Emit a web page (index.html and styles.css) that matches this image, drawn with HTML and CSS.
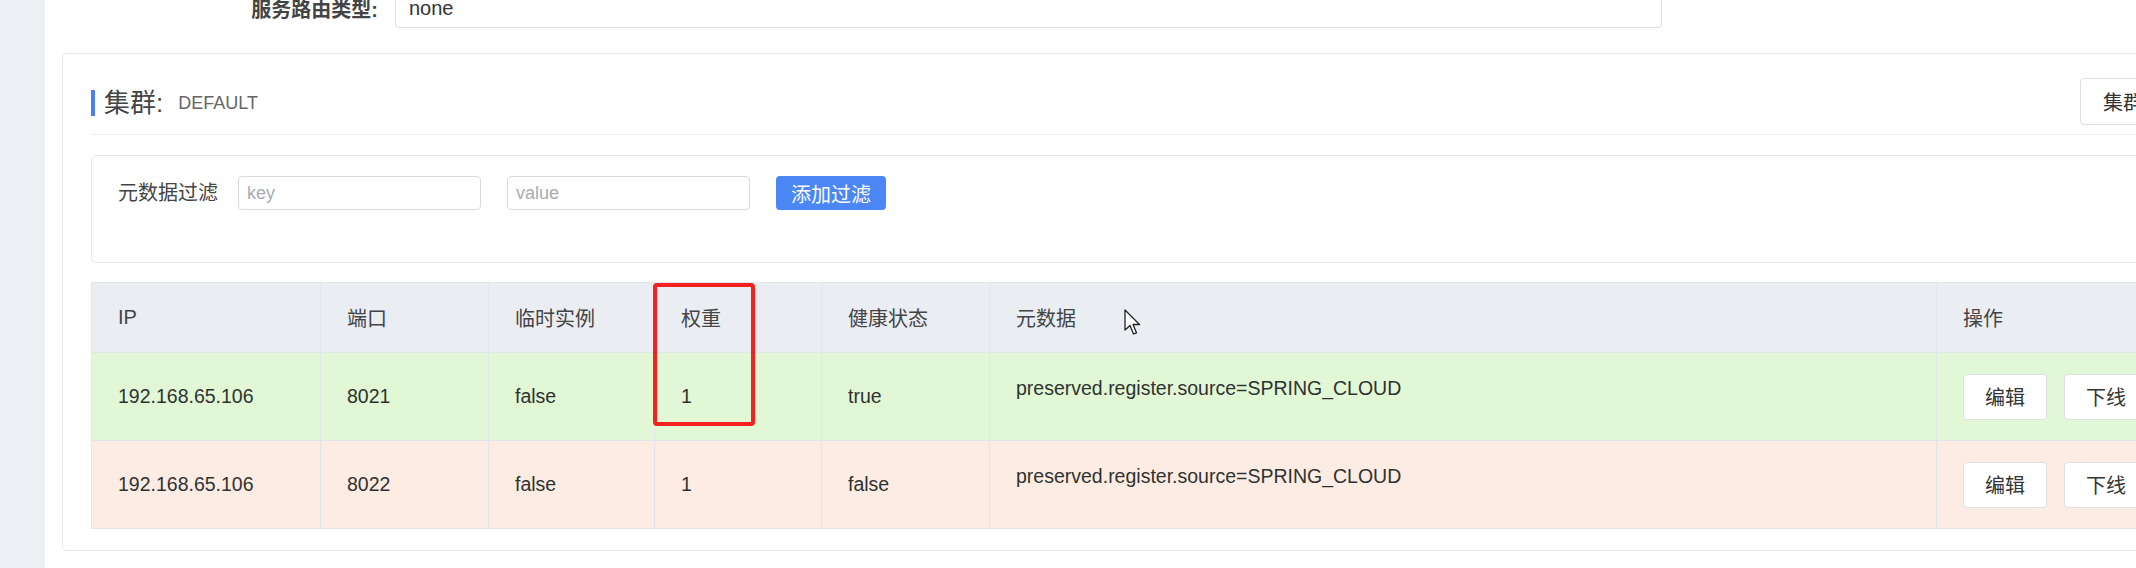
FILE: index.html
```html
<!DOCTYPE html>
<html lang="zh">
<head>
<meta charset="utf-8">
<title>集群</title>
<link rel="stylesheet" href="styles.css">
</head>
<body>
<div class="layout">
  <aside class="sidebar"></aside>
  <main class="main">
    <div class="form-row">
      <label class="form-label">服务路由类型:</label>
      <div class="form-input">none</div>
    </div>
    <section class="card">
      <div class="card-header">
        <div class="title"><span class="title-main">集群:</span><span class="title-sub">DEFAULT</span></div>
        <button class="btn btn-header">集群配置</button>
      </div>
      <div class="filter">
        <span class="filter-label">元数据过滤</span>
        <input class="filter-input" placeholder="key">
        <input class="filter-input" placeholder="value">
        <button class="btn-primary">添加过滤</button>
      </div>
      <div class="table-wrap">
        <table class="grid">
          <colgroup>
            <col class="c-ip"><col class="c-port"><col class="c-eph"><col class="c-weight"><col class="c-health"><col class="c-meta"><col class="c-op">
          </colgroup>
          <thead>
            <tr><th>IP</th><th>端口</th><th>临时实例</th><th>权重</th><th>健康状态</th><th>元数据</th><th>操作</th></tr>
          </thead>
          <tbody>
            <tr class="row-ok">
              <td>192.168.65.106</td><td>8021</td><td>false</td><td>1</td><td>true</td>
              <td><span class="meta">preserved.register.source=SPRING_CLOUD</span></td>
              <td><div class="ops"><button class="btn">编辑</button><button class="btn">下线</button></div></td>
            </tr>
            <tr class="row-bad">
              <td>192.168.65.106</td><td>8022</td><td>false</td><td>1</td><td>false</td>
              <td><span class="meta">preserved.register.source=SPRING_CLOUD</span></td>
              <td><div class="ops"><button class="btn">编辑</button><button class="btn">下线</button></div></td>
            </tr>
          </tbody>
        </table>
        <div class="highlight"></div>
        <svg class="cursor" width="18" height="27" viewBox="0 0 18 27"><path d="M1 1 L1 21 L6 16.5 L9.5 25 L12.5 23.8 L9 15.5 L15.5 15.5 Z" fill="#fff" stroke="#222" stroke-width="1.3" stroke-linejoin="round"/></svg>
      </div>
    </section>
  </main>
</div>
</body>
</html>
```
FILE: styles.css
```css
* { box-sizing: border-box; }
html, body { margin: 0; padding: 0; background: #fff; }
body {
  width: 2136px;
  height: 568px;
  overflow: hidden;
  font-family: "Liberation Sans", "Noto Sans CJK SC", sans-serif;
  color: #333;
}
.layout { display: flex; height: 568px; }
.sidebar { width: 45px; flex-shrink: 0; background: #edf0f5; }
.main { flex: 1; min-width: 0; overflow: hidden; padding-left: 17px; }

.form-row { display: flex; align-items: center; height: 40px; margin-top: -12px; }
.form-label {
  width: 316px; margin-right: 17px; text-align: right;
  font-size: 20px; font-weight: 600; color: #444;
}
.form-input {
  width: 1267px; height: 40px; border: 1px solid #dcdfe6; border-radius: 4px;
  padding-left: 13px; line-height: 38px; font-size: 20px; color: #333;
}

.card {
  width: 2173px; margin-top: 25px; border: 1px solid #e6e8ec; border-radius: 5px;
  padding: 0 28px 21px 28px;
}
.card-header {
  display: flex; align-items: center; justify-content: space-between;
  height: 81px; padding-top: 18px; border-bottom: 1px solid #ebedf1;
}
.title { border-left: 4px solid #4a7ff3; padding-left: 9px; line-height: 26px; height: 26px; display: flex; align-items: center; }
.title-main { font-size: 26px; color: #444; }
.title-sub { font-size: 18px; color: #666; margin-left: 15px; }

.btn {
  height: 46px; padding: 0 21px; border: 1px solid #dcdfe6; border-radius: 4px;
  background: #fff; font-family: inherit; font-size: 20px; color: #333;
}
.btn-header { height: 47px; padding: 0 22px; margin-top: -4px; }

.filter {
  display: flex; align-items: flex-start; margin-top: 20px; height: 108px;
  border: 1px solid #e6e8ec; border-radius: 5px; padding: 20px 0 0 26px;
}
.filter-label { font-size: 20px; line-height: 34px; color: #444; margin-right: 20px; }
.filter-input {
  width: 243px; height: 34px; border: 1px solid #d7dae0; border-radius: 4px;
  padding: 0 8px; font-family: inherit; font-size: 18px; color: #333; margin-right: 26px;
}
.filter-input::placeholder { color: #a8abb2; }
.btn-primary {
  height: 34px; width: 110px; border: 0; border-radius: 4px; background: #4b86f5;
  color: #fff; font-family: inherit; font-size: 20px;
}

.table-wrap { position: relative; margin-top: 19px; }
.grid { border-collapse: collapse; table-layout: fixed; width: 2117px; font-size: 19.5px; }
.c-ip { width: 229px; } .c-port { width: 168px; } .c-eph { width: 166px; } .c-weight { width: 167px; }
.c-health { width: 168px; } .c-meta { width: 947px; } .c-op { width: 272px; }
.grid th, .grid td {
  border: 1px solid #e2e5ea; text-align: left; padding: 0 0 0 26px; white-space: nowrap;
}
.grid th { height: 70px; background: #eaedf2; font-weight: normal; font-size: 20px; color: #444; }
.grid td { height: 88px; color: #2e3330; }
.row-ok td { background: #e1f7d6; }
.row-bad td { background: #fdece3; }
.meta { display: inline-block; padding-bottom: 16px; }
.ops { display: flex; gap: 17px; }

.highlight {
  position: absolute; left: 562px; top: 1px; width: 102px; height: 143px;
  border: 4px solid #f42121; border-radius: 4px;
}
.cursor { position: absolute; left: 1033px; top: 27px; }
```
